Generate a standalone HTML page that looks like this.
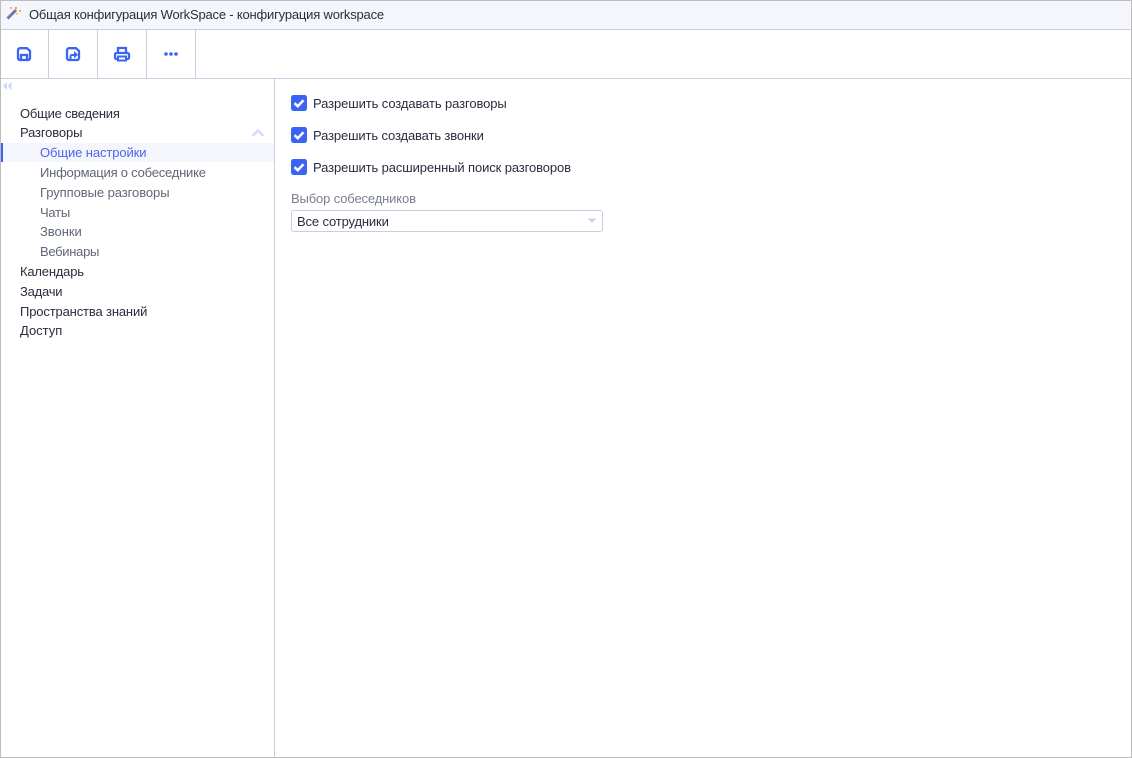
<!DOCTYPE html>
<html lang="ru"><head><meta charset="utf-8"><title>Общая конфигурация WorkSpace</title>
<style>
html,body{margin:0;padding:0;background:#fff;}
#r{position:relative;width:1132px;height:758px;overflow:hidden;background:#fff;font-family:"Liberation Sans",sans-serif;font-size:13px;color:#2a2d3c;}
.a{position:absolute;}
.t{position:absolute;white-space:nowrap;line-height:16px;height:16px;}
.s{color:#5f6676;}
svg{position:absolute;display:block;}
</style></head><body><div id="r">
<div class="a" style="left:0;top:0;width:1132px;height:29px;background:#f5f6fb"></div>
<div class="a" style="left:0;top:29px;width:1132px;height:1px;background:#c5cfe2"></div>
<div class="a" style="left:0;top:78px;width:1132px;height:1px;background:#c5cfe2"></div>
<div class="a" style="left:48px;top:30px;width:1px;height:48px;background:#c5cfe2"></div>
<div class="a" style="left:97px;top:30px;width:1px;height:48px;background:#c5cfe2"></div>
<div class="a" style="left:146px;top:30px;width:1px;height:48px;background:#c5cfe2"></div>
<div class="a" style="left:195px;top:30px;width:1px;height:48px;background:#c5cfe2"></div>
<div class="a" style="left:274px;top:79px;width:1px;height:679px;background:#c5cfe2"></div>
<div class="a" style="left:1px;top:143px;width:273px;height:19px;background:#f5f6fb"></div>
<div class="a" style="left:1px;top:143px;width:2px;height:19px;background:#3b64f5"></div>

<svg style="left:0;top:0" width="200" height="95" viewBox="0 0 200 95">
<path d="M7.500 18.500L16 10" stroke="#7077a8" stroke-width="3" fill="none"/>
<rect x="10" y="7" width="2" height="2" fill="#f0b64a"/><rect x="15" y="7" width="2" height="2" fill="#f0a63c"/><rect x="19" y="10" width="2" height="2" fill="#f0b64a"/><rect x="16" y="13" width="2" height="2" fill="#f5cf8a"/>
<g fill="none" stroke="#3b64f5" stroke-width="2.300">
<path d="M20 48.200H27L30 51V58A2 2 0 0 1 28 60H20A2 2 0 0 1 18 58V50.200A2 2 0 0 1 20 48.200Z"/>
<path d="M21 60V55H27V60"/>
<path d="M69 48.200H76L79 51V58A2 2 0 0 1 77 60H69A2 2 0 0 1 67 58V50.200A2 2 0 0 1 69 48.200Z"/>
<path d="M70.500 60V56.500A1.500 1.500 0 0 1 72 55H75" stroke-width="2"/>
<path d="M118 52V48H126V52"/>
<path d="M117 59H116.500A1.500 1.500 0 0 1 115 57.500V54.500A1.500 1.500 0 0 1 116.500 53H127.500A1.500 1.500 0 0 1 129 54.500V57.500A1.500 1.500 0 0 1 127.500 59H127"/>
<path d="M118 56.500H126V60.500H118Z" stroke-width="2"/>
</g>
<path d="M74 51L78 54.800L74 58.500Z" fill="#3b64f5"/>
<g fill="#3b64f5"><circle cx="166" cy="54" r="1.800"/><circle cx="171" cy="54" r="1.800"/><circle cx="176" cy="54" r="1.800"/></g>
<g fill="#ccd8fb"><path d="M7 82V90L3 86Z"/><path d="M11.500 82V90L7.500 86Z"/></g>
</svg>

<div class="t" style="left:29px;top:7px;letter-spacing:-.19px">Общая конфигурация WorkSpace - конфигурация workspace</div>

<div class="t" style="left:20px;top:106px;letter-spacing:-.23px">Общие сведения</div>
<div class="t" style="left:20px;top:125px;letter-spacing:-.14px">Разговоры</div>
<svg style="left:251px;top:128px" width="14" height="9" viewBox="0 0 14 9" fill="none" stroke="#d3ddfb" stroke-width="2.500"><path d="M1.500 8L7 2.500L12.500 8"/></svg>
<div class="t" style="left:40px;top:145px;letter-spacing:-.1px;color:#4f63f0">Общие настройки</div>
<div class="t s" style="left:40px;top:165px;letter-spacing:-.22px">Информация о собеседнике</div>
<div class="t s" style="left:40px;top:185px;letter-spacing:-.07px">Групповые разговоры</div>
<div class="t s" style="left:40px;top:205px;letter-spacing:-.25px">Чаты</div>
<div class="t s" style="left:40px;top:224px;letter-spacing:-.05px">Звонки</div>
<div class="t s" style="left:40px;top:244px;letter-spacing:-.3px">Вебинары</div>
<div class="t" style="left:20px;top:264px;letter-spacing:-.2px">Календарь</div>
<div class="t" style="left:20px;top:284px;letter-spacing:-.23px">Задачи</div>
<div class="t" style="left:20px;top:304px;letter-spacing:-.15px">Пространства знаний</div>
<div class="t" style="left:20px;top:323px;letter-spacing:0">Доступ</div>

<svg style="left:291px;top:95px" width="16" height="16" viewBox="0 0 16 16"><rect width="16" height="16" rx="2.500" fill="#3b64f5"/><path d="M3.500 8.200L6.800 11.200L12.500 5.200" fill="none" stroke="#fff" stroke-width="2.500"/></svg>
<div class="t" style="left:313px;top:96px;letter-spacing:-.1px">Разрешить создавать разговоры</div>
<svg style="left:291px;top:127px" width="16" height="16" viewBox="0 0 16 16"><rect width="16" height="16" rx="2.500" fill="#3b64f5"/><path d="M3.500 8.200L6.800 11.200L12.500 5.200" fill="none" stroke="#fff" stroke-width="2.500"/></svg>
<div class="t" style="left:313px;top:128px;letter-spacing:-.13px">Разрешить создавать звонки</div>
<svg style="left:291px;top:159px" width="16" height="16" viewBox="0 0 16 16"><rect width="16" height="16" rx="2.500" fill="#3b64f5"/><path d="M3.500 8.200L6.800 11.200L12.500 5.200" fill="none" stroke="#fff" stroke-width="2.500"/></svg>
<div class="t" style="left:313px;top:160px;letter-spacing:-.11px">Разрешить расширенный поиск разговоров</div>

<div class="t" style="left:291px;top:191px;letter-spacing:-.14px;color:#7a8090">Выбор собеседников</div>
<div class="a" style="left:291px;top:210px;width:310px;height:20px;border:1px solid #c5cfe2;border-radius:3px;background:#fff"></div>
<div class="t" style="left:297px;top:214px;letter-spacing:-.14px">Все сотрудники</div>
<svg style="left:587px;top:218px" width="10" height="6" viewBox="0 0 10 6" fill="#cdd5e6"><path d="M0.500 0.500H9.500L5 5Z"/></svg>

<div class="a" style="left:0;top:0;width:1132px;height:1px;background:#bdbdbd"></div>
<div class="a" style="left:0;top:0;width:1px;height:758px;background:#bdbdbd"></div>
<div class="a" style="left:1131px;top:0;width:1px;height:758px;background:#bdbdbd"></div>
<div class="a" style="left:0;top:757px;width:1132px;height:1px;background:#bdbdbd"></div>
</div></body></html>
